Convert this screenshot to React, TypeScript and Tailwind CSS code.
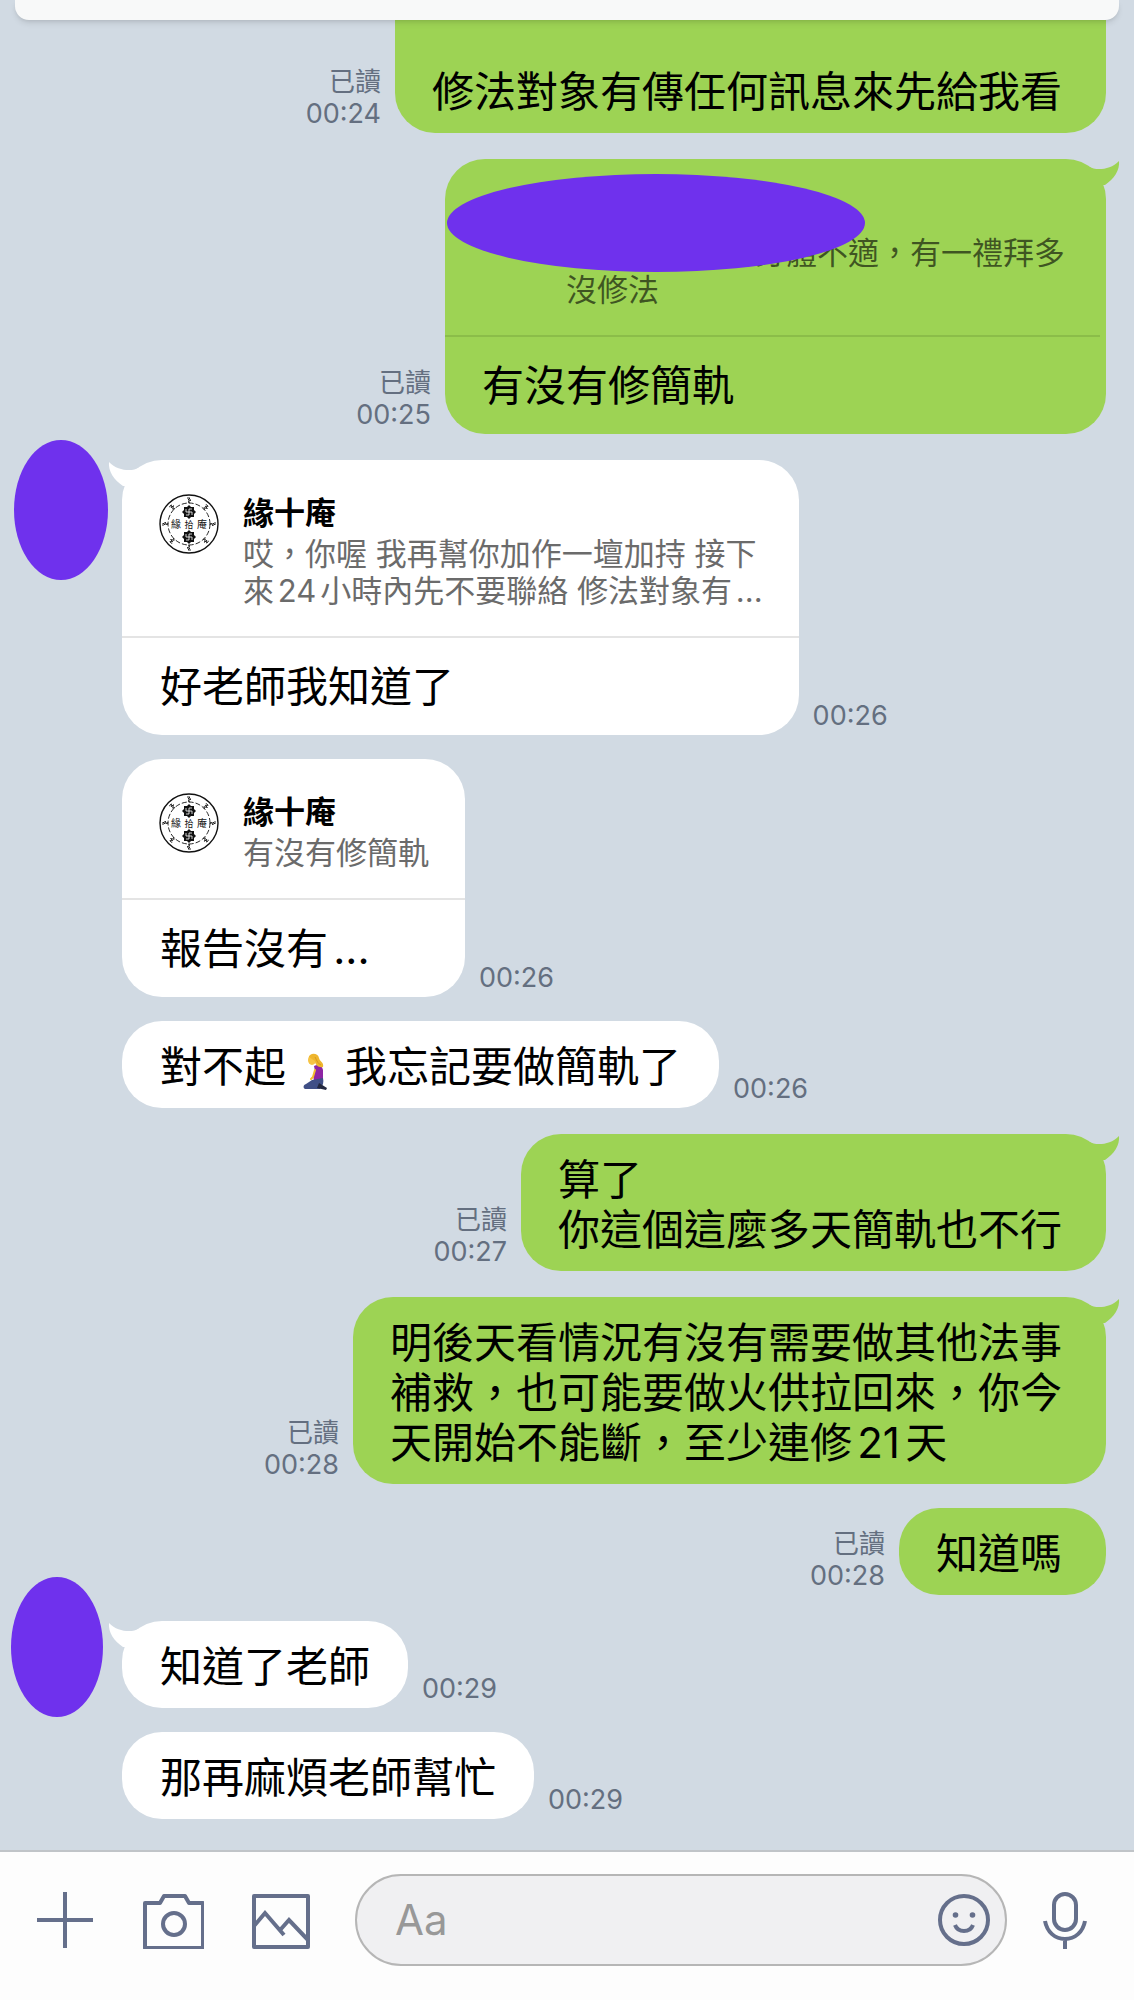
import { useState } from "react";
import type { ReactNode } from "react";

interface Quote {
  name?: string;
  lines: string[];
}

interface Message {
  id: number;
  sender: "me" | "other";
  time: string;
  body: ReactNode;
  quote?: Quote;
  tail?: boolean;
  avatar?: "tall" | "low";
}

// Emoji de mujer arrodillada
function KneelingEmoji() {
  return (
    <svg role="img" aria-label="跪" viewBox="0 0 25 37" className="mx-[17px] inline-block h-[37px] w-[25px] align-[-8px]">
      <path d="M11 13 C15 11 19 12 20 17 L20 26 L11 28 L10 22 L12 18Z" fill="#8e24a4" />
      <path d="M12 17 L10 24 L8 26" fill="none" stroke="#f2bd2e" strokeWidth="2" strokeLinecap="round" />
      <path d="M9 27 L20 25 C21 29 20 33 17 36 L2 36 C0 35 0 32 3 31Z" fill="#3f4f86" />
      <path d="M16 30 L24 35 L23 37 L14 35Z" fill="#23283f" />
      <ellipse cx="9" cy="7" rx="4" ry="5" fill="#f6c445" />
      <path d="M6 4 C6 0 15 -1 16 5 C17 9 21 9 20 14 C16 15 12 12 12 8 C10 7 8 5 6 4Z" fill="#eeb52d" />
      <path d="M12 4 C14 8 15 11 18 12" fill="none" stroke="#d89a1c" strokeWidth="1" />
    </svg>
  );
}

// Sello redondo del remitente citado
function Seal() {
  const marks = [0, 45, 90, 135, 180, 225, 270, 315];
  return (
    <svg viewBox="0 0 60 60" className="size-[60px] shrink-0" fill="none" stroke="#111" aria-hidden="true">
      <circle cx="30" cy="30" r="29" strokeWidth="1.4" />
      <circle cx="30" cy="30" r="21" strokeWidth="0.9" strokeDasharray="5 2" />
      {marks.map((angle) => (
        <path key={angle} d="M28 4h3l-2 2h3l-3 2 2 1" strokeWidth="0.9" transform={`rotate(${angle} 30 30)`} />
      ))}
      {[18, 43].map((y) => (
        <g key={y} transform={`translate(30 ${y})`}>
          <path d="M-5 -5h3l2-2 2 2h3v3l2 2-2 2v3h-3l-2 2-2-2h-3v-3l-2-2 2-2z" fill="#111" stroke="none" />
          <path d="M-3 0h6M0 -3v6M-3 -3v3M3 0v3M0 -3h3M-3 3h3" stroke="#fff" strokeWidth="0.8" />
        </g>
      ))}
      <g fill="#111" stroke="none" fontSize="10" fontFamily="Noto Sans CJK TC, sans-serif" textAnchor="middle">
        <text x="17" y="34">緣</text>
        <text x="30" y="34" fontSize="9">拾</text>
        <text x="43" y="34">庵</text>
      </g>
    </svg>
  );
}

function Tail({ side }: { side: "me" | "other" }) {
  return (
    <svg
      viewBox="0 0 30 26"
      aria-hidden="true"
      className={`absolute top-0 h-[26px] w-[30px] ${
        side === "me" ? "-right-[14px] text-[#9dd354]" : "-left-[14px] -scale-x-100 text-white"
      }`}
    >
      <path d="M0 8 C4 11 20 12 29 2 C30 11 24 20 15 26 L0 26Z" fill="currentColor" />
    </svg>
  );
}

function QuoteBlock({ quote, mine }: { quote: Quote; mine: boolean }) {
  return (
    <div className={`relative flex gap-6 border-b-2 pt-[34px] pb-[27px] pl-[37px] ${mine ? "mr-1.5 border-[#8bbd49] pr-[35px]" : "border-[#e4e4e4] pr-9"}`}>
      {quote.name ? <Seal /> : <div className="w-[60px] shrink-0" />}
      <div className={`text-[31px] leading-[37px] whitespace-nowrap ${mine ? "w-[499px] text-black/60" : "text-[#6b6b6b]"}`}>
        <p className="mb-1 h-[37px] font-semibold text-black">{quote.name}</p>
        {quote.lines.map((line, i) => (
          <p key={line} className={mine && i === 0 ? "text-right" : ""}>{line}</p>
        ))}
      </div>
      {/* Nombre oculto */}
      {mine && <div className="absolute top-[15px] left-0.5 h-[98px] w-[418px] rounded-[50%] bg-[#6f31ed]" />}
    </div>
  );
}

function MessageRow({ message }: { message: Message }) {
  const { sender, time, body, quote, tail, avatar } = message;
  const mine = sender === "me";

  return (
    <div className={`flex ${mine ? "justify-end pr-7" : "justify-start"}`}>
      {!mine && (
        <div className="w-[122px] shrink-0">
          {avatar === "tall" && <div className="-mt-5 ml-3.5 h-[140px] w-[94px] rounded-[50%] bg-[#6f31ed]" />}
          {avatar === "low" && <div className="-mt-11 -mb-3 ml-[11px] h-[140px] w-[92px] rounded-[50%] bg-[#6f31ed]" />}
        </div>
      )}
      <div className={`flex items-end gap-3.5 ${mine ? "flex-row-reverse" : ""}`}>
        <div className={`relative rounded-[40px] ${mine ? "bg-[#9dd354]" : "bg-white"}`}>
          {tail && <Tail side={sender} />}
          {quote && <QuoteBlock quote={quote} mine={mine} />}
          <div
            className={`text-[42px] leading-[50px] text-black ${mine ? "pr-11 pl-[37px]" : "px-[38px]"} ${
              quote ? "pt-6 pb-[23px]" : "pt-[21px] pb-4"
            }`}
          >
            {body}
          </div>
        </div>
        <div className={`pb-[3px] text-[26px] leading-8 whitespace-nowrap text-[#646f80] ${mine ? "text-right" : ""}`}>
          {mine && <p>已讀</p>}
          <p className="text-[27px]">{time}</p>
        </div>
      </div>
    </div>
  );
}

const groups: Message[][] = [
  [
    {
      id: 2,
      sender: "me",
      time: "00:25",
      tail: true,
      quote: { lines: ["身體不適，有一禮拜多", "沒修法"] },
      body: "有沒有修簡軌",
    },
  ],
  [
    {
      id: 3,
      sender: "other",
      time: "00:26",
      tail: true,
      avatar: "tall",
      quote: { name: "緣十庵", lines: ["哎，你喔 我再幫你加作一壇加持 接下", "來24小時內先不要聯絡 修法對象有..."] },
      body: "好老師我知道了",
    },
    {
      id: 4,
      sender: "other",
      time: "00:26",
      quote: { name: "緣十庵", lines: ["有沒有修簡軌"] },
      body: "報告沒有...",
    },
    {
      id: 5,
      sender: "other",
      time: "00:26",
      body: <>對不起<KneelingEmoji />我忘記要做簡軌了</>,
    },
  ],
  [
    {
      id: 6,
      sender: "me",
      time: "00:27",
      tail: true,
      body: <>算了<br />你這個這麼多天簡軌也不行</>,
    },
  ],
  [
    {
      id: 7,
      sender: "me",
      time: "00:28",
      tail: true,
      body: <>明後天看情況有沒有需要做其他法事<br />補救，也可能要做火供拉回來，你今<br />天開始不能斷，至少連修21天</>,
    },
    { id: 8, sender: "me", time: "00:28", body: "知道嗎" },
  ],
  [
    { id: 9, sender: "other", time: "00:29", tail: true, avatar: "low", body: "知道了老師" },
    { id: 10, sender: "other", time: "00:29", body: "那再麻煩老師幫忙" },
  ],
];

function Composer() {
  const [text, setText] = useState("");

  return (
    <footer className="flex grow items-start border-t-2 border-[#c0c4c8] bg-[#fdfdfd] pt-[22px] pr-[45px] pb-[34px] pl-9 text-[#656f8b]">
      <div className="flex h-[92px] items-center gap-[46px]">
        <button type="button" aria-label="新增">
          <svg viewBox="0 0 58 58" className="size-[58px]" fill="none" stroke="currentColor" strokeWidth="4">
            <path d="M29 1v56M1 29h56" />
          </svg>
        </button>
        <button type="button" aria-label="相機">
          <svg viewBox="0 0 64 58" className="h-[58px] w-16" fill="none" stroke="currentColor" strokeWidth="4" strokeLinejoin="round">
            <path d="M5 12h15l4-7h21l4 7h14v45H5z" />
            <circle cx="34" cy="33" r="11" />
          </svg>
        </button>
        <button type="button" aria-label="圖片">
          <svg viewBox="0 0 60 58" className="h-[58px] w-[60px]" fill="none" stroke="currentColor" strokeWidth="4" strokeLinejoin="round">
            <path d="M4 5h54v51H4z" />
            <path d="M4 35l11-13 19 22M31 38l8-9 19 20" strokeLinejoin="miter" />
          </svg>
        </button>
      </div>
      <div className="mr-[34px] ml-[45px] flex h-[92px] min-w-0 flex-1 items-center rounded-full border-2 border-[#b6b6b6] bg-[#f0f0f2] pr-3.5 pl-[38px]">
        <input
          type="text"
          aria-label="訊息"
          placeholder="Aa"
          value={text}
          onChange={(e) => setText(e.target.value)}
          className="min-w-0 flex-1 bg-transparent text-[42px] leading-[50px] text-black outline-none placeholder:text-[#989898]"
        />
        <button type="button" aria-label="貼圖">
          <svg viewBox="0 0 54 54" className="size-[54px]" fill="none" stroke="currentColor" strokeWidth="4">
            <circle cx="27" cy="27" r="24" />
            <path d="M18 32c3 8 15 8 18 0" />
            <circle cx="18.5" cy="22" r="2.8" fill="currentColor" stroke="none" />
            <circle cx="35.5" cy="22" r="2.8" fill="currentColor" stroke="none" />
          </svg>
        </button>
      </div>
      <button type="button" aria-label="錄音" className="flex h-[92px] items-center">
        <svg viewBox="0 0 48 58" className="h-[58px] w-12" fill="none" stroke="currentColor" strokeWidth="4">
          <rect x="13" y="3" width="22" height="36" rx="11" />
          <path d="M4 30c2 11 10 18 20 18s18-7 20-18M24 48v10" />
        </svg>
      </button>
    </footer>
  );
}

export default function App() {
  return (
    <div lang="zh-Hant" className="flex min-h-screen flex-col bg-[#d1dae3] font-['Inter','Noto_Sans_CJK_TC',sans-serif] [text-autospace:normal]">
      <div className="relative z-10 mx-[15px] h-5 rounded-b-[14px] bg-[#f8f9f9] shadow-md" />
      <main className="flex flex-col gap-[26px] pb-[31px]">
        {/* Mensaje cortado por la barra superior */}
        <div className="flex flex-row-reverse items-end gap-3.5 pr-7">
          <div className="rounded-b-[40px] bg-[#9dd354] pt-[47px] pr-11 pb-4 pl-[37px] text-[42px] leading-[50px] text-black">
            修法對象有傳任何訊息來先給我看
          </div>
          <div className="pb-[3px] text-right text-[26px] leading-8 text-[#646f80]">
            <p>已讀</p>
            <p className="text-[27px]">00:24</p>
          </div>
        </div>
        {groups.map((group) => (
          <div key={group[0].id} className="flex flex-col gap-6">
            {group.map((message) => (
              <MessageRow key={message.id} message={message} />
            ))}
          </div>
        ))}
      </main>
      <Composer />
    </div>
  );
}
